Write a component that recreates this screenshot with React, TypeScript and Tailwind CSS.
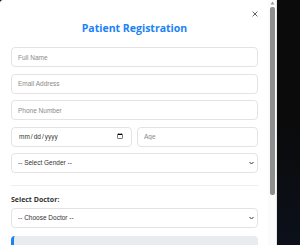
import React from 'react';

const field =
  'block w-full h-[20px] rounded-[4px] border border-[#e3e3e3] bg-white px-[6px] text-[6.5px] text-[#333] placeholder:text-[#8a8a8a] outline-none';

function Chevron() {
  return (
    <svg
      className="pointer-events-none absolute right-[4px] top-1/2 -translate-y-1/2"
      width="5"
      height="4"
      viewBox="0 0 10 8"
    >
      <path d="M1 2l4 4 4-4" fill="none" stroke="#333" strokeWidth="2" />
    </svg>
  );
}

export default function App() {
  return (
    <div className="flex h-[245px] w-[300px] overflow-hidden bg-gradient-to-b from-[#0b0b0b] via-[#0b0b0b] to-[#0b101a] font-['Liberation_Sans',Arial,sans-serif]">
      <div className="flex h-[245px] w-[277px] overflow-hidden rounded-tl-[3px] bg-white">
        {/* Modal content */}
        <div className="relative w-[268px] shrink-0 pl-[11px] pr-[10px] pt-[21px]">
          <button className="absolute right-[10px] top-[11px] p-0">
            <svg width="6" height="6" viewBox="0 0 10 10">
              <path d="M1 1l8 8M9 1l-8 8" stroke="#444" strokeWidth="1.4" />
            </svg>
          </button>

          <h2 className="text-center text-[10.5px] font-bold leading-[14px] text-[#1a82f7] font-['Open_Sans',sans-serif]">
            Patient Registration
          </h2>

          <div className="mt-[12px] flex flex-col gap-[6.5px]">
            <input className={field} placeholder="Full Name" />
            <input className={field} placeholder="Email Address" />
            <input className={field} placeholder="Phone Number" />
            <div className="flex gap-[5px]">
              <input type="date" className={field} />
              <input className={field} placeholder="Age" />
            </div>
            <div className="relative">
              <select className={`${field} appearance-none`} defaultValue="">
                <option value="">-- Select Gender --</option>
                <option>Male</option>
                <option>Female</option>
              </select>
              <Chevron />
            </div>
          </div>

          <div className="mt-[12px] border-t border-[#eeeeee]" />

          <label className="mt-[9px] block text-[7px] font-bold leading-[10px] text-[#333] font-['Open_Sans',sans-serif]">
            Select Doctor:
          </label>
          <div className="relative mt-[3px]">
            <select className={`${field} appearance-none`} defaultValue="">
              <option value="">-- Choose Doctor --</option>
              <option>Dr. Smith</option>
            </select>
            <Chevron />
          </div>

          <div className="mt-[8px] rounded-[4px] border-l-[3px] border-[#1a82f7] bg-[#e9ecef] px-[8px] py-[7px] text-[6.5px] leading-[9px] text-[#666]">
            Please select a doctor to view their available time slots.
          </div>
        </div>

        {/* Scrollbar */}
        <div className="flex w-[9px] shrink-0 flex-col items-center border-r border-[#e6e6e6] bg-[#fbfbfb]">
          <svg width="5" height="4" viewBox="0 0 10 8" className="mt-[1px]">
            <path d="M1 7L5 1l4 6z" fill="#9a9a9a" />
          </svg>
          <div className="mt-[2px] h-[188px] w-[5px] rounded-[2px] bg-[#8e8e8e]" />
        </div>
      </div>
    </div>
  );
}
